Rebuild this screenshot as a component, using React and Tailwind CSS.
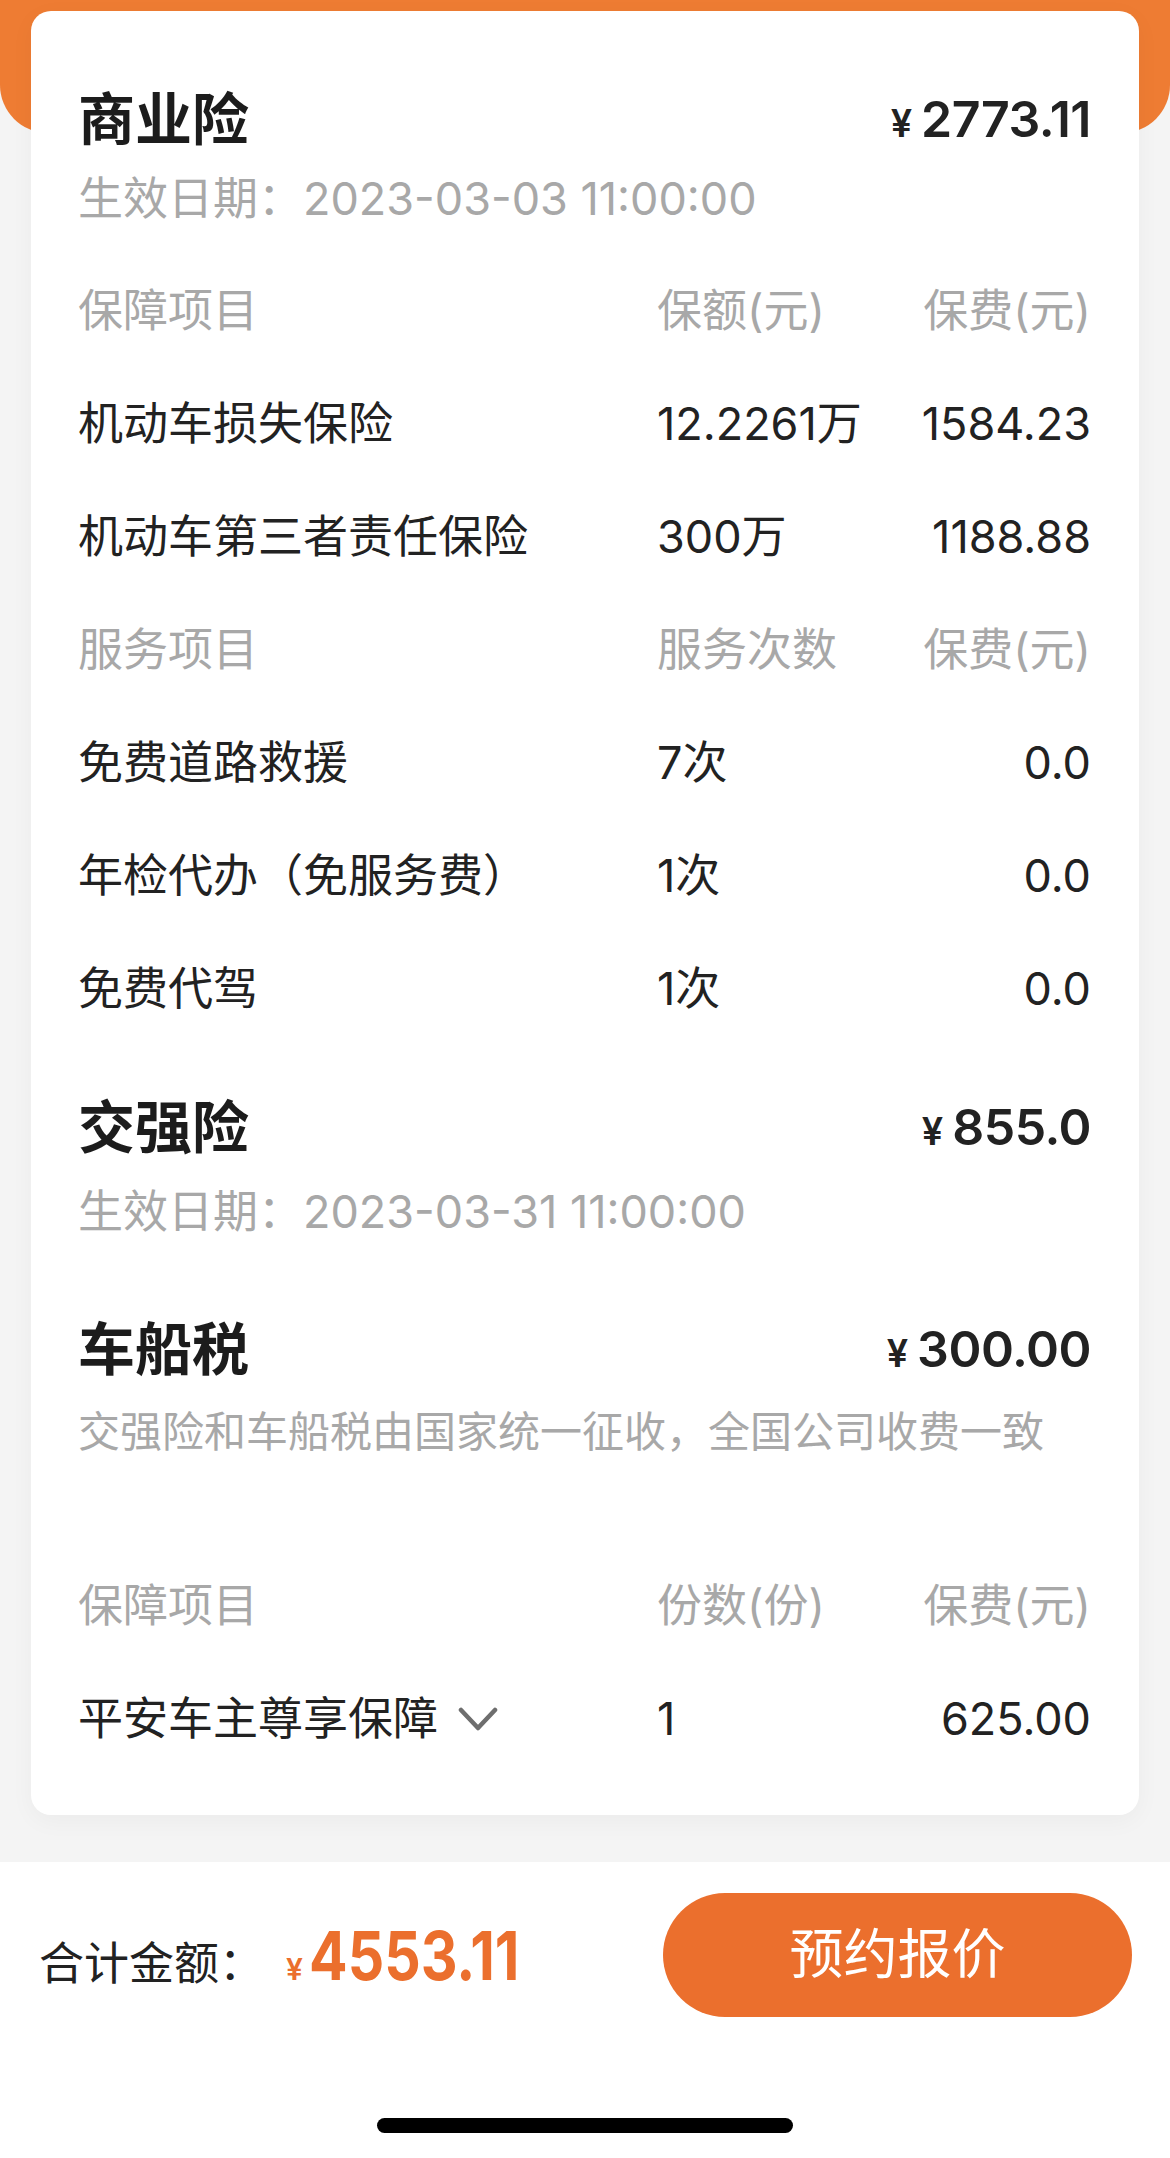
import React from "react";

const coverRows = [
  { name: "机动车损失保险", amount: "12.2261万", fee: "1584.23" },
  { name: "机动车第三者责任保险", amount: "300万", fee: "1188.88" },
];

const serviceRows = [
  { name: "免费道路救援", amount: "7次", fee: "0.0" },
  { name: "年检代办（免服务费）", amount: "1次", fee: "0.0" },
  { name: "免费代驾", amount: "1次", fee: "0.0" },
];

function Row({ name, amount, fee, head = false, children }) {
  return (
    <div className={`flex h-[113px] items-center text-[45px] leading-none ${head ? "text-[#a8a8a8]" : "text-[#222]"}`}>
      <div className="flex w-[579px] shrink-0 items-center">
        {name}
        {children}
      </div>
      <div className="flex-1">{amount}</div>
      <div className="text-right">{fee}</div>
    </div>
  );
}

function Heading({ title, value }) {
  return (
    <div className="flex h-[80px] items-center justify-between leading-none">
      <span className="text-[57px] font-bold text-[#1c1c1c]">{title}</span>
      <span className="flex items-baseline text-[#222]">
        <span className="text-[38px] font-semibold">¥</span>
        <span className="ml-[9px] text-[50px] font-semibold tracking-[-0.5px]">{value}</span>
      </span>
    </div>
  );
}

export default function App() {
  return (
    <div className="min-h-[2158px] w-[1170px] bg-white font-[Inter,'Noto_Sans_CJK_SC',sans-serif]">
      <div className="bg-[#f4f4f4] pb-[47px]">
        {/* orange top band behind the card */}
        <div className="h-[133px] rounded-b-[48px] bg-[#ee7c33]" />

        <div className="relative mx-[31px] -mt-[122px] rounded-[20px] bg-white pb-[40px] pl-[47px] pr-[48px] pt-[68px] shadow-[0_6px_24px_rgba(0,0,0,0.04)]">
          {/* 商业险 */}
          <Heading title="商业险" value="2773.11" />
          <div className="flex h-[78px] items-center text-[45px] leading-none text-[#a8a8a8]">
            生效日期：2023-03-03 11:00:00
          </div>

          <div className="mt-[17px]">
            <Row head name="保障项目" amount="保额(元)" fee="保费(元)" />
            {coverRows.map((r) => (
              <Row key={r.name} {...r} />
            ))}
            <Row head name="服务项目" amount="服务次数" fee="保费(元)" />
            {serviceRows.map((r) => (
              <Row key={r.name} {...r} />
            ))}
          </div>

          {/* 交强险 */}
          <div className="mt-[42px]">
            <Heading title="交强险" value="855.0" />
            <div className="flex h-[88px] items-center text-[45px] leading-none text-[#a8a8a8]">
              生效日期：2023-03-31 11:00:00
            </div>
          </div>

          {/* 车船税 */}
          <div className="mt-[54px]">
            <Heading title="车船税" value="300.00" />
            <div className="flex h-[86px] items-center text-[42px] leading-none text-[#a8a8a8]">
              交强险和车船税由国家统一征收，全国公司收费一致
            </div>
          </div>

          <div className="mt-[74px]">
            <Row head name="保障项目" amount="份数(份)" fee="保费(元)" />
            <Row name="平安车主尊享保障" amount="1" fee="625.00">
              <svg className="ml-[20px]" width="40" height="24" viewBox="0 0 40 24" fill="none">
                <polyline points="3,3 20,21 37,3" stroke="#6e6e6e" strokeWidth="4.5" strokeLinecap="round" strokeLinejoin="round" />
              </svg>
            </Row>
          </div>
        </div>
      </div>

      {/* footer */}
      <div className="h-[296px] pt-[31px]">
        <div className="flex h-[124px] items-center justify-between pl-[39px] pr-[38px]">
          <div className="flex items-baseline leading-none">
            <span className="text-[45px] text-[#222]">合计金额：</span>
            <span className="ml-[22px] text-[30px] font-semibold text-[#eb6f2d]">¥</span>
            <span className="ml-[6px] inline-block origin-left scale-x-[0.84] text-[68px] font-bold text-[#eb6f2d]">
              4553.11
            </span>
          </div>
          <button className="flex h-[124px] w-[469px] items-center justify-center rounded-full bg-[#eb6f2d] text-[54px] leading-none text-white">
            预约报价
          </button>
        </div>
        <div className="mx-auto mt-[101px] h-[15px] w-[416px] rounded-full bg-black" />
      </div>
    </div>
  );
}
